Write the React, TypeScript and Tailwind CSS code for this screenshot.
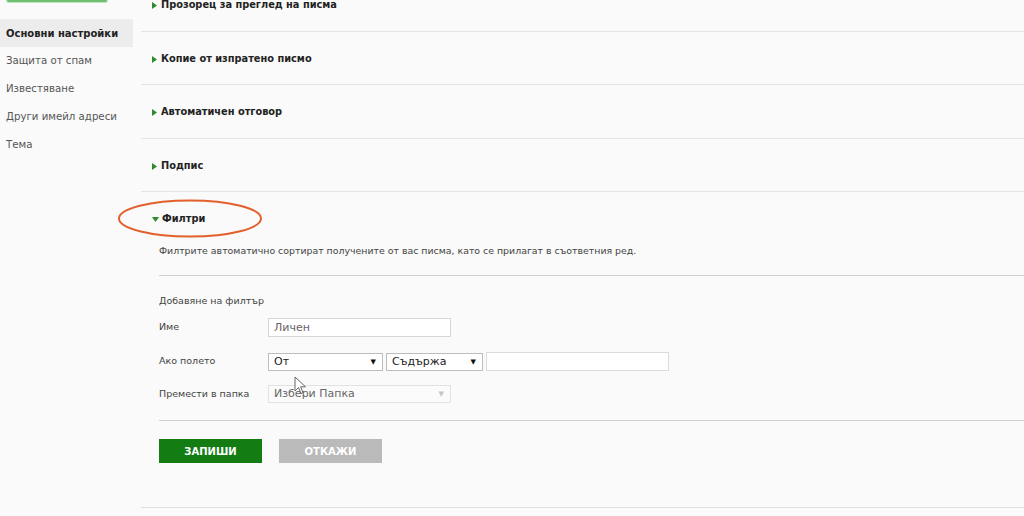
const MENU = ["Основни настройки", "Защита от спам", "Известяване", "Други имейл адреси", "Тема"];

const SECTIONS = [
  "Прозорец за преглед на писма",
  "Копие от изпратено писмо",
  "Автоматичен отговор",
  "Подпис",
];

function Arrow({ open }: { open?: boolean }) {
  return open ? (
    <svg width="7" height="5" viewBox="0 0 7 5" className="mr-[3px]">
      <path d="M0 0 L7 0 L3.5 5 Z" fill="#2f8a2f" />
    </svg>
  ) : (
    <svg width="5" height="7" viewBox="0 0 5 7" className="mr-[4px]">
      <path d="M0 0 L5 3.5 L0 7 Z" fill="#2f8a2f" />
    </svg>
  );
}

function Select({ label, w, disabled }: { label: string; w: string; disabled?: boolean }) {
  return (
    <div
      className={`flex h-[18px] items-center justify-between border pl-[5px] pr-[6px] text-[11px] ${w} ${
        disabled ? "border-[#e2e2e2] bg-[#fbfbfb] text-[#666]" : "border-[#bdbdbd] bg-white text-[#222]"
      }`}
    >
      <span>{label}</span>
      <span className={`text-[7px] ${disabled ? "text-[#c4c4c4]" : "text-[#111]"}`}>▼</span>
    </div>
  );
}

export default function App() {
  return (
    <div
      className="relative h-[516px] w-[1024px] overflow-hidden bg-[#f9faf9] text-[#333]"
      style={{ fontFamily: '"DejaVu Sans", Verdana, sans-serif' }}
    >
      <div className="flex">
        {/* sidebar */}
        <div className="w-[133px] shrink-0">
          <div className="ml-[6px] h-[3px] w-[102px] rounded-b-[3px] border-x border-b border-[#bfe3bf] bg-[#6fbf6f]" />
          <div className="mt-[16px] flex flex-col">
            {MENU.map((m, i) => (
              <div
                key={m}
                className={`flex h-[28px] items-center pl-[6px] ${
                  i === 0 ? "bg-[#ececec] text-[10px] font-bold text-[#222]" : "text-[10.2px] text-[#555]"
                }`}
              >
                {m}
              </div>
            ))}
          </div>
        </div>

        {/* main */}
        <div className="ml-[8px] flex-1">
          <div className="-mt-[22px]">
            {SECTIONS.map((s) => (
              <div
                key={s}
                className="flex h-[53.5px] items-center border-b border-[#e4e4e4] pl-[11px] pt-[3px] text-[9.8px] font-bold text-[#222]"
              >
                <Arrow />
                {s}
              </div>
            ))}
          </div>

          <div className="pl-[18px]">
            <div className="flex h-[52px] items-center pt-[2px] text-[9.8px] font-bold text-[#222]">
              <span className="-ml-[7px] flex items-center">
                <Arrow open />
                Филтри
              </span>
            </div>
            <div className="text-[9.4px] text-[#444]">
              Филтрите автоматично сортират получените от вас писма, като се прилагат в съответния ред.
            </div>
            <div className="mt-[17px] border-b border-[#cfcfcf]" />

            <div className="mt-[18px] text-[9.5px] text-[#444]">Добавяне на филтър</div>

            <div className="mt-[10px] flex items-center text-[9.5px] text-[#444]">
              <span className="w-[109px] -translate-y-[1px]">Име</span>
              <div className="flex h-[19px] w-[183px] items-center border border-[#d6d6d6] bg-white pl-[5px] text-[11px] text-[#666]">
                Личен
              </div>
            </div>

            <div className="mt-[15px] flex items-center text-[9.5px] text-[#444]">
              <span className="w-[109px] -translate-y-[1px]">Ако полето</span>
              <Select label="От" w="w-[115px]" />
              <div className="ml-[3px]">
                <Select label="Съдържа" w="w-[97px]" />
              </div>
              <div className="ml-[3px] h-[19px] w-[183px] border border-[#dcdcdc] bg-white" />
            </div>

            <div className="mt-[14px] flex items-center text-[9.5px] text-[#444]">
              <span className="w-[109px]">Премести в папка</span>
              <Select label="Избери Папка" w="w-[183px]" disabled />
            </div>

            <div className="mt-[17px] border-b border-[#cfcfcf]" />

            <div className="mt-[18px] flex gap-[17px]">
              <button className="h-[24px] w-[103px] bg-[#137d13] text-[10px] font-bold text-white">ЗАПИШИ</button>
              <button className="h-[24px] w-[103px] bg-[#bababa] text-[10px] font-bold text-white">ОТКАЖИ</button>
            </div>
          </div>

          <div className="mt-[44px] border-b border-[#e0e0e0]" />
        </div>
      </div>

      {/* annotation ellipse */}
      <svg className="pointer-events-none absolute left-[116px] top-[198px]" width="150" height="42" viewBox="0 0 150 42">
        <ellipse cx="74" cy="20.5" rx="71" ry="18" fill="none" stroke="#e2602c" strokeWidth="2" />
      </svg>

      {/* mouse cursor */}
      <svg className="pointer-events-none absolute left-[294px] top-[376px]" width="14" height="20" viewBox="0 0 14 20">
        <path d="M1 1 L1 15 L4.5 11.5 L7 17.5 L9 16.6 L6.6 10.8 L11.5 10.8 Z" fill="#fff" stroke="#666" strokeWidth="1" strokeLinejoin="round" />
      </svg>
    </div>
  );
}
